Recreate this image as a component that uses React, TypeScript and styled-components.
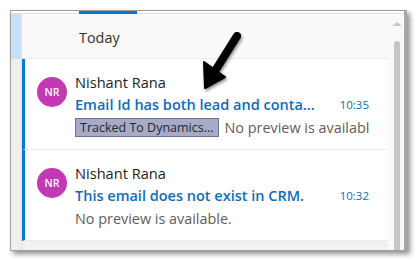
import styled, { createGlobalStyle } from "styled-components";

type TMail = {
    id: number,
    from: string,
    initials: string,
    subject: string,
    time: string,
    tag?: string,
    preview: string
}

const MAILS: TMail[] = [
    {
        id: 1,
        from: "Nishant Rana",
        initials: "NR",
        subject: "Email Id has both lead and conta...",
        time: "10:35",
        tag: "Tracked To Dynamics...",
        preview: "No preview is available."
    },
    {
        id: 2,
        from: "Nishant Rana",
        initials: "NR",
        subject: "This email does not exist in CRM.",
        time: "10:32",
        preview: "No preview is available."
    }
]

const FONT = `"Open Sans", "Noto Sans", sans-serif`

const GlobalStyle = createGlobalStyle`
    body {
        margin: 0;
        background: #ffffff;
        font-family: ${FONT};
    }
`
const StyledPage = styled.div`
    position: relative;
    width: 419px;
    height: 260px;
    padding: 10px 0 0 10px;
    box-sizing: border-box;
`
const StyledFrame = styled.div`
    width: 397px;
    height: 241px;
    box-sizing: border-box;
    border: 1px solid #9e9e9e;
    border-right: 3px solid #a8a8a8;
    display: flex;
    flex-direction: column;
    background: #ffffff;
    box-shadow: 3px 3px 5px rgba(0, 0, 0, 0.45);
    overflow: hidden;
`
const StyledTopBar = styled.div`
    height: 2px;
    flex: none;
    padding-left: 68px;
    border-bottom: 1px solid #e4e2e0;
    background: #ffffff;
`
const StyledIndicator = styled.div`
    width: 58px;
    height: 3px;
    background: #0078d4;
`
const StyledBody = styled.div`
    flex: 1;
    display: flex;
    min-height: 0;
`
const StyledLeftStrip = styled.div`
    width: 10px;
    flex: none;
    display: flex;
    flex-direction: column;
    background: #f0efee;
    border-right: 1px solid #e6e4e2;
`
const StyledStripActive = styled.div`
    height: 45px;
    background: #c7e0f4;
`
const StyledMain = styled.div`
    width: 366px;
    flex: none;
    display: flex;
    flex-direction: column;
    background: #f3f2f1;
`
const StyledHeader = styled.div`
    height: 45px;
    flex: none;
    box-sizing: border-box;
    display: flex;
    align-items: center;
    padding-left: 57px;
    padding-top: 3px;
    background: #faf9f8;
    border-bottom: 1px solid #edebe9;
    font-size: 14.4px;
    color: #323130;
`
const StyledItem = styled.div`
    height: 91px;
    flex: none;
    box-sizing: border-box;
    display: flex;
    gap: 8px;
    padding: 18px 19px 0 12px;
    background: #ffffff;
    border-left: 3px solid #0078d4;
    border-bottom: 1px solid #edebe9;
`
const StyledAvatar = styled.div`
    width: 30px;
    height: 30px;
    flex: none;
    border-radius: 50%;
    background: #c239b3;
    color: #ffffff;
    font-size: 10.5px;
    font-weight: 600;
    display: flex;
    align-items: center;
    justify-content: center;
`
const StyledContent = styled.div`
    flex: 1;
    min-width: 0;
    margin-top: -7px;
    display: flex;
    flex-direction: column;
`
const StyledLine = styled.div`
    height: 23px;
    display: flex;
    align-items: center;
    gap: 6px;
    white-space: nowrap;
    overflow: hidden;
`
const StyledName = styled.span`
    font-size: 14.6px;
    color: #201f1e;
`
const StyledSubject = styled.span`
    flex: 1;
    font-size: 14.5px;
    font-weight: 600;
    color: #0f6cbd;
    overflow: hidden;
`
const StyledTime = styled.span`
    font-size: 11.5px;
    color: #0f6cbd;
`
const StyledTag = styled.span`
    flex: none;
    height: 19px;
    box-sizing: border-box;
    padding: 0 4px;
    display: flex;
    align-items: center;
    background: #a6abc7;
    border: 1px solid #6f7389;
    font-size: 12.5px;
    color: #252535;
`
const StyledPreview = styled.span`
    min-width: 0;
    font-size: 14.4px;
    color: #605e5c;
    overflow: hidden;
`
const StyledScroll = styled.div`
    flex: 1;
    position: relative;
    background: #faf9f8;
    display: flex;
    flex-direction: column;
    align-items: center;
    padding-top: 8px;
    gap: 15px;
`
const StyledScrollArrow = styled.div`
    width: 0;
    height: 0;
    margin-left: 1px;
    border-left: 5px solid transparent;
    border-right: 5px solid transparent;
    border-bottom: 4px solid #c8c6c4;
`
const StyledThumb = styled.div`
    flex: 1;
    width: 6px;
    margin-left: 1px;
    background: #c8c6c4;
    border-radius: 3px 3px 0 0;
`
const StyledArrow = styled.svg`
    position: absolute;
    left: 196px;
    top: 28px;
    filter: drop-shadow(1px 2px 1.5px rgba(0, 0, 0, 0.45));
`

const MailItem = ({ mail }: { mail: TMail }) => (
    <StyledItem>
        <StyledAvatar>{mail.initials}</StyledAvatar>
        <StyledContent>
            <StyledLine>
                <StyledName>{mail.from}</StyledName>
            </StyledLine>
            <StyledLine>
                <StyledSubject>{mail.subject}</StyledSubject>
                <StyledTime>{mail.time}</StyledTime>
            </StyledLine>
            <StyledLine>
                {mail.tag && <StyledTag>{mail.tag}</StyledTag>}
                <StyledPreview>{mail.preview}</StyledPreview>
            </StyledLine>
        </StyledContent>
    </StyledItem>
)

export default function App() {
    return (
        <>
            <GlobalStyle />
            <StyledPage>
                <StyledFrame>
                    <StyledTopBar>
                        <StyledIndicator />
                    </StyledTopBar>
                    <StyledBody>
                        <StyledLeftStrip>
                            <StyledStripActive />
                        </StyledLeftStrip>
                        <StyledMain>
                            <StyledHeader>Today</StyledHeader>
                            {MAILS.map(mail => <MailItem key={mail.id} mail={mail} />)}
                        </StyledMain>
                        <StyledScroll>
                            <StyledScrollArrow />
                            <StyledThumb />
                        </StyledScroll>
                    </StyledBody>
                </StyledFrame>
                <StyledArrow width="50" height="66" viewBox="0 0 50 66">
                    <line x1="41" y1="8" x2="19" y2="43" stroke="#000" strokeWidth="8" strokeLinecap="round" />
                    <polygon points="8,34 9,60 29,49" fill="#000" stroke="#000" strokeWidth="2" strokeLinejoin="round" />
                </StyledArrow>
            </StyledPage>
        </>
    )
}
